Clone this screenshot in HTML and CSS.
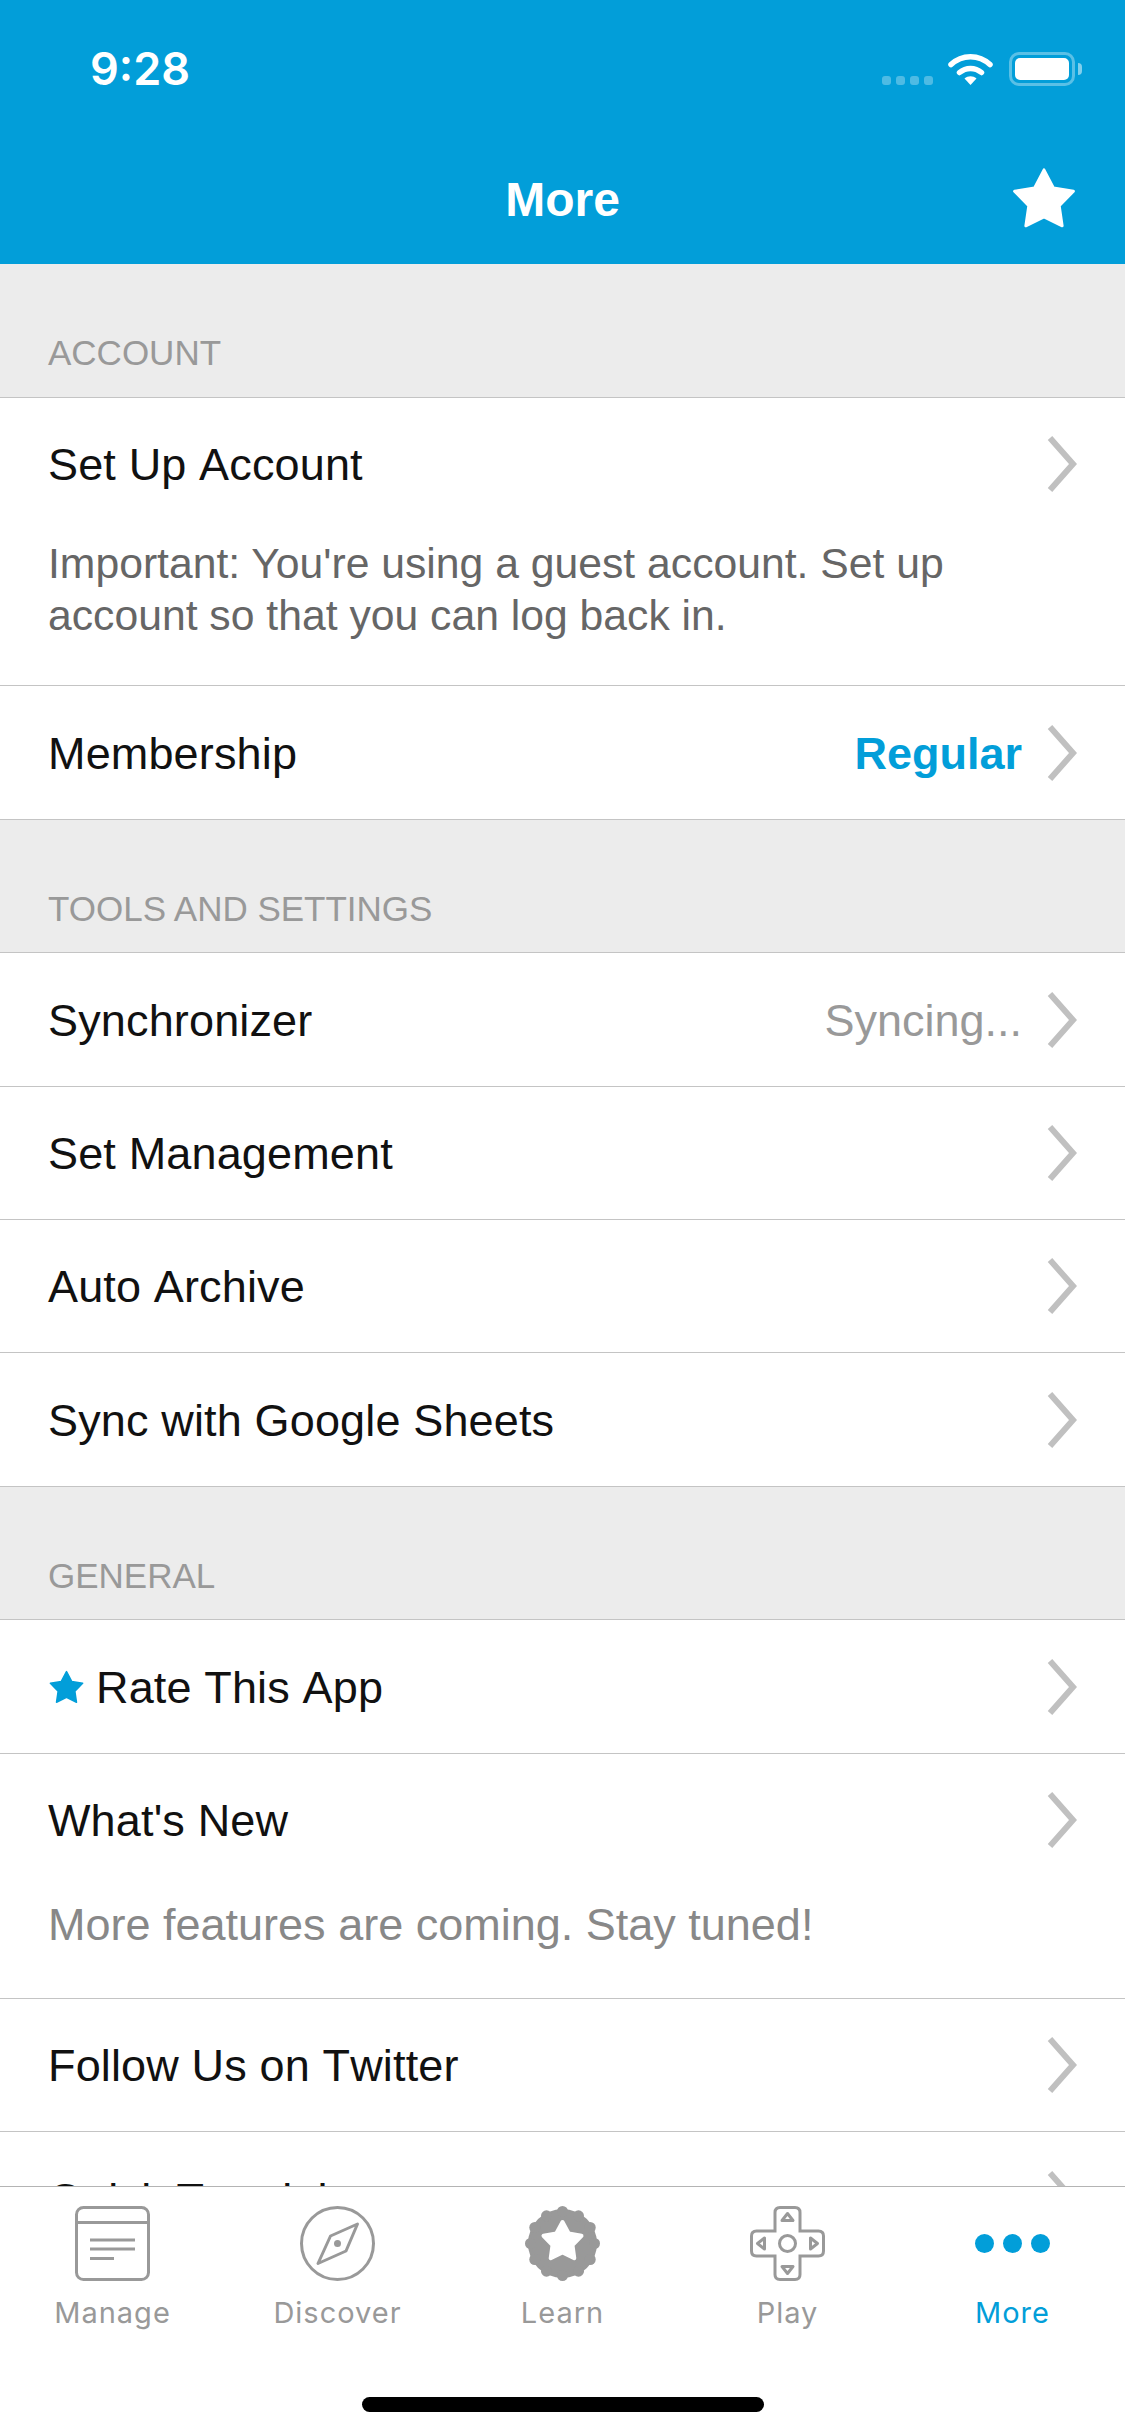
FILE: index.html
```html
<!DOCTYPE html>
<html lang="en">
<head>
    <meta charset="UTF-8">
    <title>More</title>
    <link rel="stylesheet" href="styles.css">
</head>
<body>
    <div class="screen">
        <header class="header">
            <div class="status-bar">
                <span class="time">9:28</span>
                <div class="status-icons">
                    <div class="signal"><i></i><i></i><i></i><i></i></div>
                    <svg class="wifi" width="45" height="33" viewBox="0 0 45 33">
                        <path d="M3 12.5C14 2 31 2 42 12.5" fill="none" stroke="#fff" stroke-width="5.5" stroke-linecap="round"/>
                        <path d="M11.5 20.5C18 15 27 15 33.5 20.5" fill="none" stroke="#fff" stroke-width="5.5" stroke-linecap="round"/>
                        <path d="M16.5 26.5C20 23.5 25 23.5 28.5 26.5L22.5 33Z" fill="#fff"/>
                    </svg>
                    <div class="battery"><div class="battery-level"></div></div>
                    <div class="battery-cap"></div>
                </div>
            </div>
            <div class="nav-bar">
                <span></span>
                <h1 class="nav-title">More</h1>
                <svg class="nav-star" width="68" height="62" viewBox="0 0 24 22">
                    <polygon points="12,1 15.35,7.39 22.46,8.6 17.42,13.76 18.47,20.9 12,17.7 5.53,20.9 6.58,13.76 1.54,8.6 8.65,7.39" fill="#fff" stroke="#fff" stroke-width="1" stroke-linejoin="round"/>
                </svg>
            </div>
        </header>

        <main class="content">
            <div class="section-title">ACCOUNT</div>
            <div class="group">
                <div class="row">
                    <div class="row-main">
                        <span class="row-label">Set Up Account</span>
                        <svg class="chevron" width="30" height="56" viewBox="0 0 30 56"><path d="M3 2L26 28L3 54" fill="none" stroke="#c0c0c0" stroke-width="6"/></svg>
                    </div>
                    <p class="note note-dark">Important: You're using a guest account. Set up account so that you can log back in.</p>
                </div>
                <div class="row">
                    <div class="row-main">
                        <span class="row-label">Membership</span>
                        <span class="row-value value-blue">Regular</span>
                        <svg class="chevron" width="30" height="56" viewBox="0 0 30 56"><path d="M3 2L26 28L3 54" fill="none" stroke="#c0c0c0" stroke-width="6"/></svg>
                    </div>
                </div>
            </div>

            <div class="section-title">TOOLS AND SETTINGS</div>
            <div class="group">
                <div class="row">
                    <div class="row-main">
                        <span class="row-label">Synchronizer</span>
                        <span class="row-value">Syncing...</span>
                        <svg class="chevron" width="30" height="56" viewBox="0 0 30 56"><path d="M3 2L26 28L3 54" fill="none" stroke="#c0c0c0" stroke-width="6"/></svg>
                    </div>
                </div>
                <div class="row">
                    <div class="row-main">
                        <span class="row-label">Set Management</span>
                        <svg class="chevron" width="30" height="56" viewBox="0 0 30 56"><path d="M3 2L26 28L3 54" fill="none" stroke="#c0c0c0" stroke-width="6"/></svg>
                    </div>
                </div>
                <div class="row">
                    <div class="row-main">
                        <span class="row-label">Auto Archive</span>
                        <svg class="chevron" width="30" height="56" viewBox="0 0 30 56"><path d="M3 2L26 28L3 54" fill="none" stroke="#c0c0c0" stroke-width="6"/></svg>
                    </div>
                </div>
                <div class="row">
                    <div class="row-main">
                        <span class="row-label">Sync with Google Sheets</span>
                        <svg class="chevron" width="30" height="56" viewBox="0 0 30 56"><path d="M3 2L26 28L3 54" fill="none" stroke="#c0c0c0" stroke-width="6"/></svg>
                    </div>
                </div>
            </div>

            <div class="section-title">GENERAL</div>
            <div class="group">
                <div class="row">
                    <div class="row-main">
                        <svg class="rate-star" width="37" height="34" viewBox="0 0 24 22">
                            <polygon points="12,1 15.35,7.39 22.46,8.6 17.42,13.76 18.47,20.9 12,17.7 5.53,20.9 6.58,13.76 1.54,8.6 8.65,7.39" fill="#029ed9" stroke="#029ed9" stroke-width="1" stroke-linejoin="round"/>
                        </svg>
                        <span class="row-label">Rate This App</span>
                        <svg class="chevron" width="30" height="56" viewBox="0 0 30 56"><path d="M3 2L26 28L3 54" fill="none" stroke="#c0c0c0" stroke-width="6"/></svg>
                    </div>
                </div>
                <div class="row">
                    <div class="row-main">
                        <span class="row-label">What's New</span>
                        <svg class="chevron" width="30" height="56" viewBox="0 0 30 56"><path d="M3 2L26 28L3 54" fill="none" stroke="#c0c0c0" stroke-width="6"/></svg>
                    </div>
                    <p class="note note-light">More features are coming. Stay tuned!</p>
                </div>
                <div class="row">
                    <div class="row-main">
                        <span class="row-label">Follow Us on Twitter</span>
                        <svg class="chevron" width="30" height="56" viewBox="0 0 30 56"><path d="M3 2L26 28L3 54" fill="none" stroke="#c0c0c0" stroke-width="6"/></svg>
                    </div>
                </div>
                <div class="row">
                    <div class="row-main">
                        <span class="row-label">Quick Tutorial</span>
                        <svg class="chevron" width="30" height="56" viewBox="0 0 30 56"><path d="M3 2L26 28L3 54" fill="none" stroke="#c0c0c0" stroke-width="6"/></svg>
                    </div>
                </div>
            </div>
        </main>

        <nav class="tab-bar">
            <div class="tabs">
                <div class="tab">
                    <svg width="75" height="75" viewBox="0 0 75 75" fill="none" stroke="#999" stroke-width="3">
                        <rect x="1.5" y="1.5" width="72" height="72" rx="7"/>
                        <path d="M1.5 16.5H73.5M15 34H60M15 43H60M15 52.5H39"/>
                    </svg>
                    <span class="tab-label">Manage</span>
                </div>
                <div class="tab">
                    <svg width="75" height="75" viewBox="0 0 75 75" fill="none" stroke="#999" stroke-width="3">
                        <circle cx="37.5" cy="37.5" r="36"/>
                        <path d="M57.5 18L46 45L18 57.5L30.5 30Z" stroke-linejoin="round"/>
                        <circle cx="37.5" cy="37.5" r="3.5" fill="#999" stroke="none"/>
                    </svg>
                    <span class="tab-label">Discover</span>
                </div>
                <div class="tab">
                    <svg width="75" height="75" viewBox="0 0 75 75" fill="#999">
                        <circle cx="37.5" cy="37.5" r="34.5"/>
                        <circle cx="69.5" cy="37.5" r="5.5"/><circle cx="65.2" cy="21.5" r="5.5"/>
                        <circle cx="53.5" cy="9.8" r="5.5"/><circle cx="37.5" cy="5.5" r="5.5"/>
                        <circle cx="21.5" cy="9.8" r="5.5"/><circle cx="9.8" cy="21.5" r="5.5"/>
                        <circle cx="5.5" cy="37.5" r="5.5"/><circle cx="9.8" cy="53.5" r="5.5"/>
                        <circle cx="21.5" cy="65.2" r="5.5"/><circle cx="37.5" cy="69.5" r="5.5"/>
                        <circle cx="53.5" cy="65.2" r="5.5"/><circle cx="65.2" cy="53.5" r="5.5"/>
                        <polygon points="37.5,16 43.7,27.5 56.5,29.8 47.5,39.2 49.3,52.2 37.5,46.5 25.7,52.2 27.5,39.2 18.5,29.8 31.3,27.5" fill="#fff" stroke="#fff" stroke-width="4" stroke-linejoin="round"/>
                    </svg>
                    <span class="tab-label">Learn</span>
                </div>
                <div class="tab">
                    <svg width="75" height="75" viewBox="0 0 75 75" fill="none" stroke="#999" stroke-width="3">
                        <path d="M30 1.5H45Q50 1.5 50 6.5V25H68.5Q73.5 25 73.5 30V45Q73.5 50 68.5 50H50V68.5Q50 73.5 45 73.5H30Q25 73.5 25 68.5V50H6.5Q1.5 50 1.5 45V30Q1.5 25 6.5 25H25V6.5Q25 1.5 30 1.5Z"/>
                        <circle cx="37.5" cy="37.5" r="8"/>
                        <g stroke-linejoin="round">
                            <path d="M37.5 7.5L43 14.5H32Z"/>
                            <path d="M37.5 67.5L43 60.5H32Z"/>
                            <path d="M7.5 37.5L14.5 32V43Z"/>
                            <path d="M67.5 37.5L60.5 32V43Z"/>
                        </g>
                    </svg>
                    <span class="tab-label">Play</span>
                </div>
                <div class="tab tab-active">
                    <svg width="75" height="75" viewBox="0 0 75 75" fill="#029ed9">
                        <circle cx="9.5" cy="37.5" r="9.5"/>
                        <circle cx="37.5" cy="37.5" r="9.5"/>
                        <circle cx="65.5" cy="37.5" r="9.5"/>
                    </svg>
                    <span class="tab-label">More</span>
                </div>
            </div>
            <div class="home-indicator"></div>
        </nav>
    </div>
</body>
</html>
```

FILE: styles.css
```css
* {
    box-sizing: border-box;
}
body {
    margin: 0;
    font-family: 'Liberation Sans', Arial, sans-serif;
    background: #ececec;
}
.screen {
    width: 1125px;
    height: 2436px;
    display: flex;
    flex-direction: column;
    overflow: hidden;
}
.header {
    flex: none;
    height: 264px;
    background: #029ed9;
    color: white;
}
.status-bar {
    height: 132px;
    padding: 44px 43px 0 90px;
    display: flex;
    justify-content: space-between;
    align-items: flex-start;
}
.time {
    font-family: Inter, sans-serif;
    font-size: 45px;
    font-weight: 600;
    line-height: 50px;
}
.status-icons {
    display: flex;
    align-items: flex-start;
    padding-top: 8px;
}
.signal {
    display: flex;
    gap: 5px;
    margin: 24px 15px 0 0;
}
.signal i {
    width: 9px;
    height: 9px;
    border-radius: 3px;
    background: rgba(255, 255, 255, 0.3);
}
.wifi {
    margin-right: 16px;
}
.battery {
    width: 66px;
    height: 34px;
    padding: 3px;
    border: 3px solid rgba(255, 255, 255, 0.35);
    border-radius: 10px;
}
.battery-level {
    width: 100%;
    height: 100%;
    background: white;
    border-radius: 5px;
}
.battery-cap {
    width: 4px;
    height: 12px;
    margin: 11px 0 0 3px;
    background: rgba(255, 255, 255, 0.5);
    border-radius: 0 4px 4px 0;
}
.nav-bar {
    display: grid;
    grid-template-columns: 1fr auto 1fr;
    align-items: center;
    height: 132px;
}
.nav-title {
    margin: 0;
    font-size: 48px;
    font-weight: bold;
    padding-top: 2px;
}
.nav-star {
    justify-self: end;
    margin-right: 47px;
}
.content {
    flex: 1;
    min-height: 0;
    overflow: hidden;
}
.section-title {
    height: 133.67px;
    padding: 68px 48px 0;
    font-size: 35px;
    line-height: 42px;
    color: #999;
    border-bottom: 1px solid #c4c4c4;
}
.group {
    background: white;
}
.row {
    border-bottom: 1px solid #c4c4c4;
}
.row-main {
    height: 132.33px;
    padding: 0 48px;
    display: flex;
    align-items: center;
}
.row-label {
    font-size: 45px;
    color: #111;
    flex: 1;
    font-kerning: none;
    letter-spacing: 0.15px;
    padding-top: 2px;
}
.row-value {
    font-size: 45px;
    color: #999;
    margin-right: 25px;
    padding-top: 2px;
}
.value-blue {
    color: #029ed9;
    font-weight: bold;
}
.chevron {
    flex: none;
}
.rate-star {
    flex: none;
    margin-right: 11px;
}
.note {
    margin: 0;
    padding: 0 48px;
    line-height: 52px;
}
.note-dark {
    font-size: 42.7px;
    color: #666;
    padding-top: 7px;
    padding-bottom: 44.5px;
    padding-right: 150px;
}
.note-light {
    font-size: 45px;
    color: #888;
    padding-top: 13px;
    padding-bottom: 47px;
}
.tab-bar {
    flex: none;
    height: 250px;
    background: white;
    border-top: 1px solid #b4b4b4;
    position: relative;
}
.tabs {
    display: grid;
    grid-template-columns: repeat(5, 225px);
    padding-top: 19px;
}
.tab {
    display: flex;
    flex-direction: column;
    align-items: center;
    gap: 14px;
    color: #999;
}
.tab-label {
    font-family: Inter, sans-serif;
    font-size: 29px;
    line-height: 36px;
    letter-spacing: 1px;
}
.tab-active {
    color: #029ed9;
}
.home-indicator {
    position: absolute;
    left: 362px;
    bottom: 24px;
    width: 402px;
    height: 15px;
    background: black;
    border-radius: 8px;
}
```
